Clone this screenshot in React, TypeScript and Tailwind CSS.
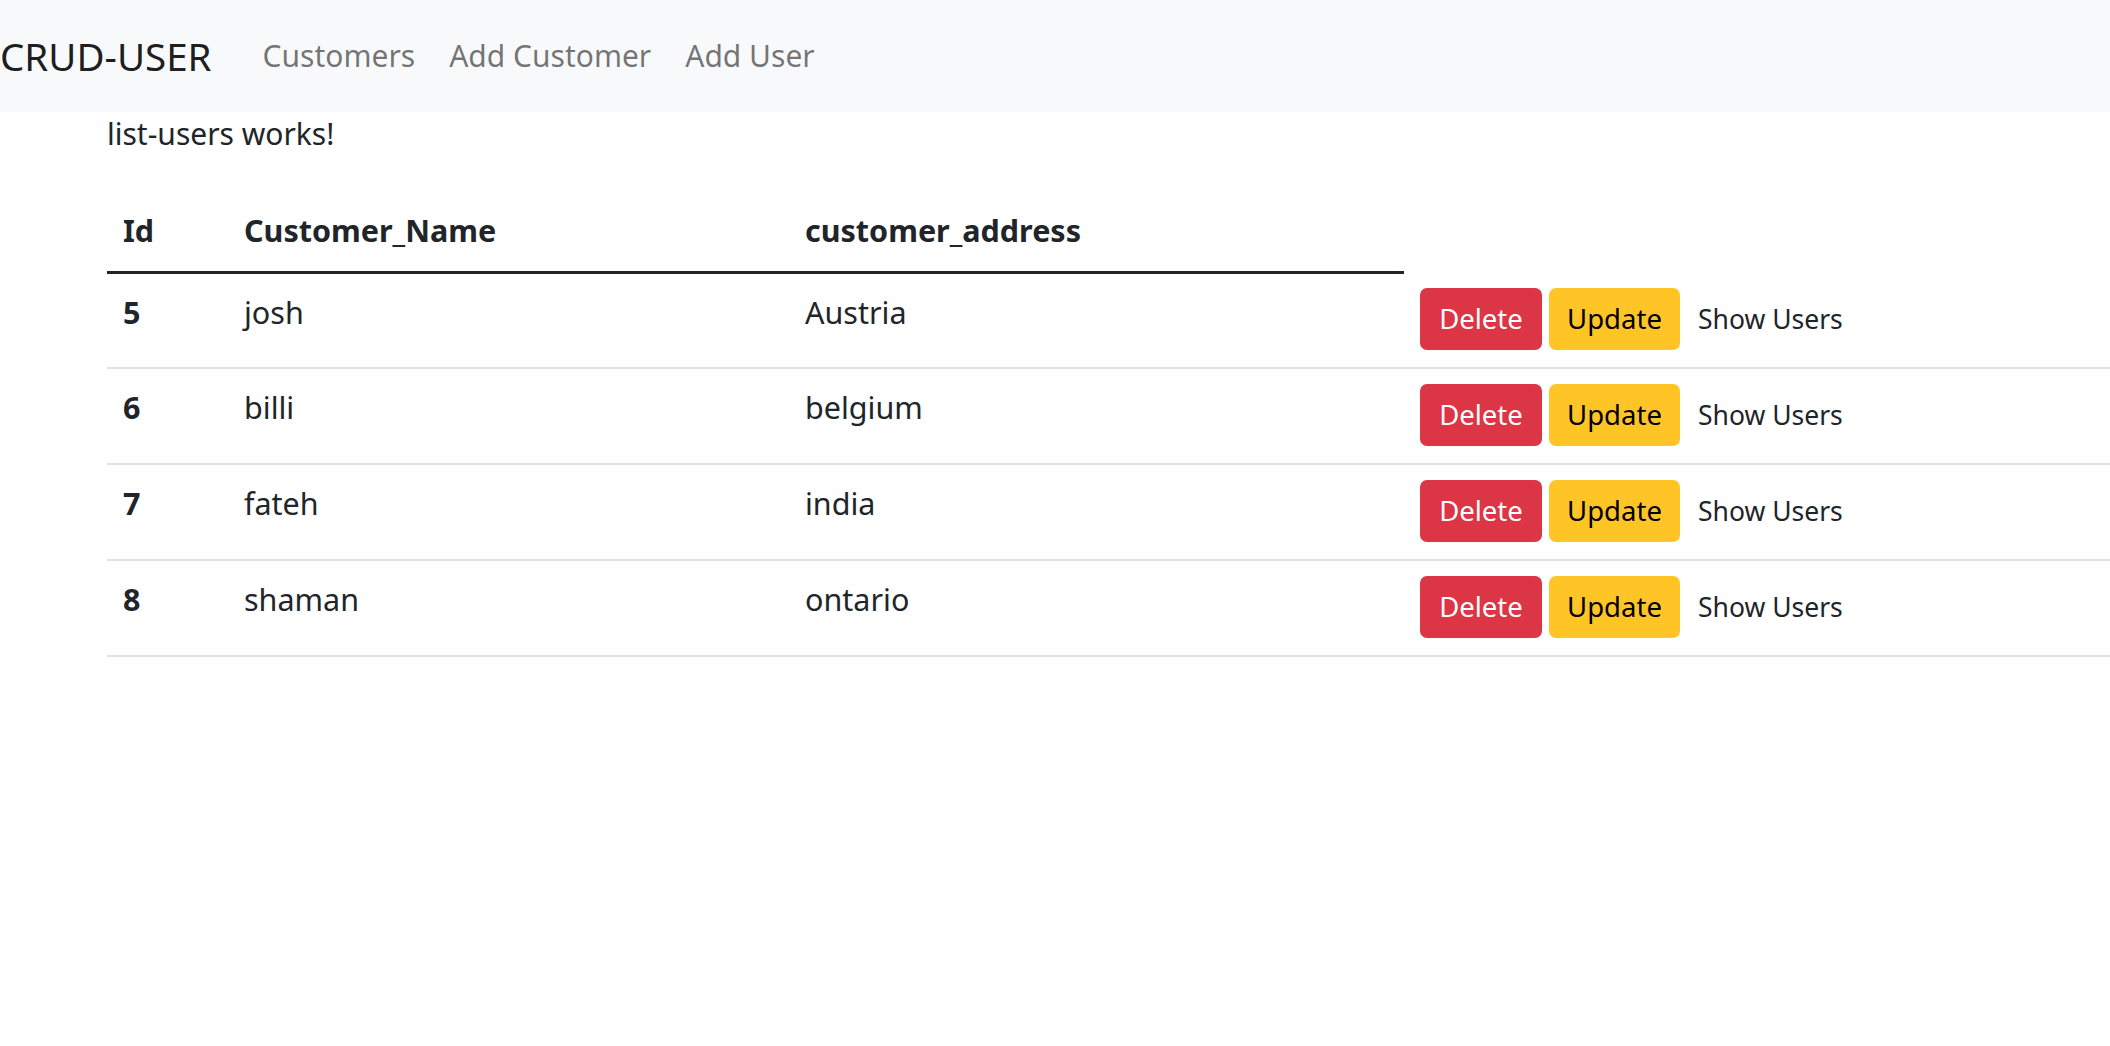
import React from 'react';

interface Customer {
  id: number;
  name: string;
  address: string;
}

const customers: Customer[] = [
  { id: 5, name: 'josh', address: 'Austria' },
  { id: 6, name: 'billi', address: 'belgium' },
  { id: 7, name: 'fateh', address: 'india' },
  { id: 8, name: 'shaman', address: 'ontario' },
];

const App: React.FC = () => {
  return (
    <div className="min-h-screen bg-white text-[#212529] font-['Noto_Sans',sans-serif] text-[30px] leading-[42px]">
      {/* Navbar */}
      <nav className="h-[112px] bg-[#f8f9fa] flex items-center">
        <a className="text-[38.5px] leading-[52px] text-[rgba(0,0,0,0.9)] mr-[34px]">CRUD-USER</a>
        <ul className="flex items-center">
          <li><a className="px-[17px] text-[rgba(0,0,0,0.55)]">Customers</a></li>
          <li><a className="px-[17px] text-[rgba(0,0,0,0.55)]">Add Customer</a></li>
          <li><a className="px-[17px] text-[rgba(0,0,0,0.55)]">Add User</a></li>
        </ul>
      </nav>

      <div className="pl-[107px]">
        <p className="mt-[1px] mb-[40px]">list-users works!</p>

        <table className="w-full border-collapse text-left text-[30.5px]">
          <thead>
            <tr>
              <th className="w-[121px] px-[16px] pt-[14px] pb-[20px] border-b-[3px] border-[#212529] font-bold">Id</th>
              <th className="w-[561px] px-[16px] pt-[14px] pb-[20px] border-b-[3px] border-[#212529] font-bold">Customer_Name</th>
              <th className="w-[615px] px-[16px] pt-[14px] pb-[20px] border-b-[3px] border-[#212529] font-bold">customer_address</th>
            </tr>
          </thead>
          <tbody>
            {customers.map((c) => (
              <tr key={c.id} className="border-b-2 border-[#dee2e6]">
                <td className="align-top px-[16px] pt-[17px] pb-[15px] font-bold">{c.id}</td>
                <td className="align-top px-[16px] pt-[17px] pb-[15px]">{c.name}</td>
                <td className="align-top px-[16px] pt-[17px] pb-[15px]">{c.address}</td>
                <td className="align-top px-[16px] pt-[15px] pb-[17px] whitespace-nowrap text-[27.5px]">
                  <div className="flex items-center gap-[7px]">
                    <button className="h-[62px] w-[122px] rounded-[7px] bg-[#dc3545] text-white">Delete</button>
                    <button className="h-[62px] w-[131px] rounded-[7px] bg-[#ffc425] text-black">Update</button>
                    <button className="h-[62px] pl-[11px] pr-[20px] text-[#212529] text-[26.5px]">Show Users</button>
                  </div>
                </td>
              </tr>
            ))}
          </tbody>
        </table>
      </div>
    </div>
  );
};

export default App;
